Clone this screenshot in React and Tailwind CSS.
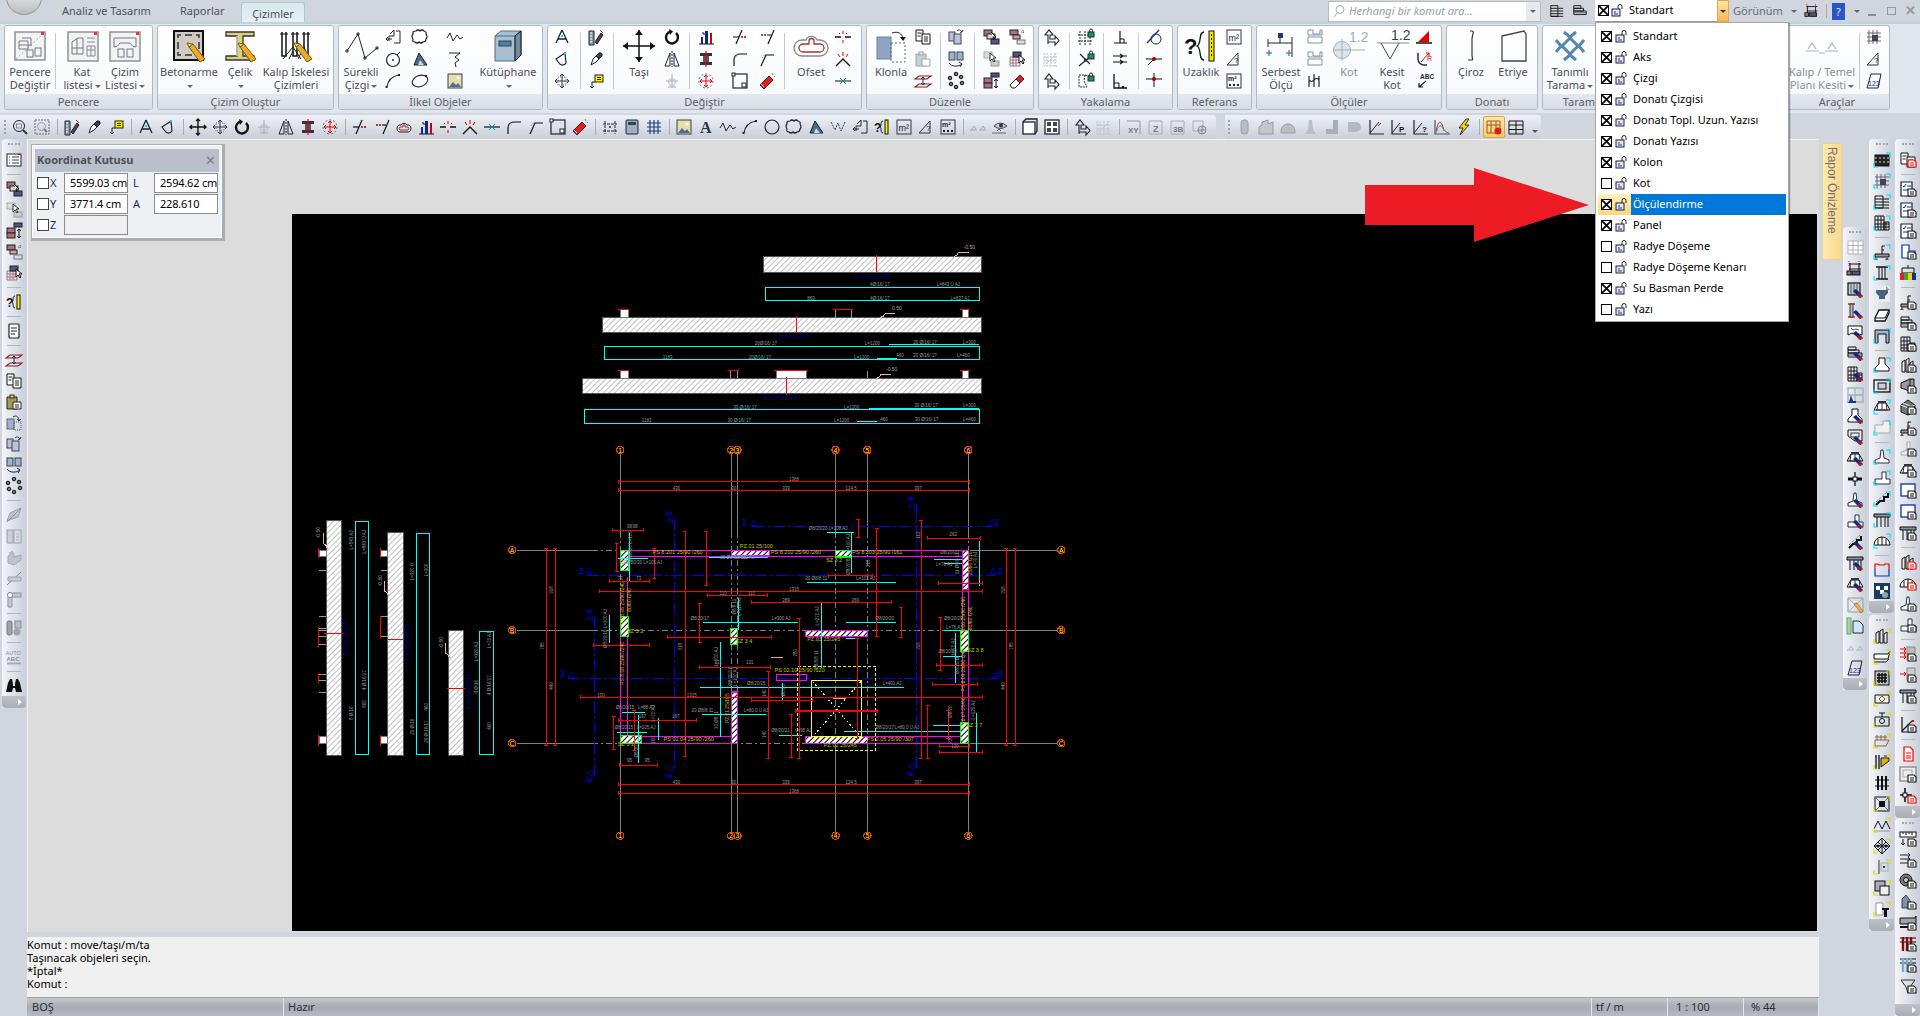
import React from 'react';

// --- small icons, drawn on an 18x18 box ---
const G = {
    zoomfit: <><circle cx="8" cy="8" r="5.5" stroke="#223" /><rect x="5.5" y="6" width="5" height="4" stroke="#888" /><path d="M12 12l4 4" strokeWidth="2" stroke="#334" /></>,
    zoombox: <><rect x="2" y="2" width="14" height="14" stroke="#667" strokeDasharray="2 1" /><circle cx="8.5" cy="8.5" r="4" stroke="#99a" /><path d="M11 11l3 3" stroke="#778" strokeWidth="2" /></>,
    rulerpen: <><path d="M2 3h5v14H2z" fill="#8c97a8" stroke="#223" /><path d="M3 5h2M3 8h2M3 11h2M3 14h2" stroke="#fff" /><path d="M8 14l6-9 2 2-6 9z" fill="#445" stroke="#223" /><path d="M13 2l3 3" stroke="#c33" /></>,
    dropper: <><path d="M4 15l2-6 5-5 3 3-5 5z" fill="#fff" stroke="#223" /><path d="M9 6l3-3h2l1 1v2l-3 3z" fill="#345" stroke="#123" /></>,
    note: <><rect x="8" y="3" width="8" height="7" fill="#fff200" stroke="#222" /><path d="M10 5.5h4M10 7.5h4" stroke="#222" /><path d="M8 10H5v6M3 14l2 2 2-2" stroke="#222" /></>,
    compass: <><path d="M9 2L3 15M9 2l6 13M5 11h8" stroke="#223" strokeWidth="1.3" /><rect x="8" y="7" width="2" height="2" fill="#0cf" stroke="none" /></>,
    triloop: <><path d="M3 9l9-6 1 10a4 4 0 0 1-7 0z" stroke="#223" strokeWidth="1.2" /><rect x="11" y="2" width="2" height="2" fill="#0cf" stroke="none" /></>,
    move: <><path d="M9 1v16M1 9h16M7 3l2-2 2 2M7 15l2 2 2-2M3 7L1 9l2 2M15 7l2 2-2 2" stroke="#111" strokeWidth="1.4" /></>,
    moveg: <><path d="M9 2v14M2 9h14M7 4l2-2 2 2M7 14l2 2 2-2M4 7L2 9l2 2M14 7l2 2-2 2" stroke="#335" /><rect x="5" y="5" width="8" height="8" stroke="#778" strokeDasharray="1 1" /></>,
    rotate: <><path d="M13 5a6 6 0 1 1-5-1.5" stroke="#111" strokeWidth="2.4" /><path d="M6 1l4 2.5L7 7z" fill="#111" stroke="none" /></>,
    fadecross: <><path d="M9 2v14M3 9h12" stroke="#aab" /><circle cx="9" cy="10" r="3.5" stroke="#bbc" /><path d="M5 15h8" stroke="#aab" /></>,
    mirror: <><path d="M7 3v13H2zM11 3v13h5z" stroke="#223" /><path d="M9 1v16" stroke="#223" strokeDasharray="2 1" /></>,
    column: <><path d="M3 3h12v3H3zM3 12h12v3H3z" fill="#334" stroke="none" /><rect x="6" y="6" width="6" height="6" fill="#556" stroke="none" /><path d="M9 1v16" stroke="#e00" strokeWidth="1.2" /></>,
    redcross: <><circle cx="9" cy="9" r="7" stroke="#567" strokeDasharray="2 2" /><path d="M9 3v12M3 9h12M7 5l2-2 2 2M7 13l2 2 2-2M5 7L3 9l2 2M13 7l2 2-2 2" stroke="#e00" /></>,
    trim: <><path d="M5 16L11 2" stroke="#111" strokeWidth="1.2" /><path d="M2 9h6" stroke="#111" strokeWidth="1.2" /><path d="M10 9h6" stroke="#a00" strokeWidth="1.5" strokeDasharray="2 1" /></>,
    trim2: <><path d="M10 16L16 2" stroke="#111" strokeWidth="1.2" /><path d="M8 7H2" stroke="#a00" strokeWidth="1.5" strokeDasharray="2 1" /><path d="M9 7h4" stroke="#111" strokeWidth="1.2" /></>,
    offs: <><path d="M4 14a4 4 0 0 1 0-7h2a3.500 3.500 0 0 1 6 0h2a4 4 0 0 1 0 7z" stroke="#222" /><path d="M5 12a2 2 0 0 1 0-3h3V7h2v2h3a2 2 0 0 1 0 3z" stroke="#a33" /></>,
    bars: <><path d="M2 16h15" stroke="#111" /><rect x="4" y="9" width="2" height="7" fill="#0a2a8a" stroke="none" /><rect x="8" y="3" width="3" height="13" fill="#0a2a8a" stroke="none" /><rect x="13" y="5" width="2" height="11" fill="#c00" stroke="none" /><path d="M5 5h2v2" stroke="#111" /></>,
    brk: <><path d="M1 9h6M11 9h6" stroke="#111" strokeWidth="1.6" /><path d="M9 3v3M9 12v3M5 5l1 1M13 5l-1 1" stroke="#c00" /></>,
    brk2: <><path d="M2 16l7-7 7 7" stroke="#111" strokeWidth="1.4" /><path d="M9 2v4M4 4l2 3M14 4l-2 3" stroke="#c00" /></>,
    xcross: <><path d="M1 9h16" stroke="#111" strokeWidth="1.2" /><path d="M6 6l6 6M12 6l-6 6" stroke="#08a" /></>,
    fillet: <><path d="M3 16V10c0-4 3-6 6-6h7" stroke="#111" strokeWidth="1.2" /><path d="M3 9l5-6" stroke="#555" strokeDasharray="1 1" /></>,
    fillet2: <><path d="M3 16L8 5h8" stroke="#111" strokeWidth="1.2" /><path d="M4 8c1-2 2-3 4-4" stroke="#777" strokeDasharray="1 1" /></>,
    rectn: <><rect x="2" y="2" width="14" height="14" stroke="#223" strokeWidth="1.2" /><rect x="1" y="1" width="3" height="3" fill="#fff" stroke="#223" /><rect x="11" y="11" width="4" height="4" fill="#fff" stroke="#223" /></>,
    eraser: <><path d="M2 13l9-9 4 4-9 9z" fill="#d22" stroke="#511" /><path d="M3 12l3 3" stroke="#fff" /><path d="M14 1l1 2M16 4l1 1" stroke="#888" /></>,
    eraserw: <><path d="M2 13l6-6 4 4-5 5H4z" fill="#fff" stroke="#222" /><path d="M8 7l4-4 4 4-4 4z" fill="#d22" stroke="#511" /></>,
    griddot: <><path d="M4 3v13M14 3v13M2 6h14M2 13h14" stroke="#223" strokeDasharray="3 1" /><path d="M8 9h2M9 8v2" stroke="#223" /></>,
    colsb: <><rect x="3" y="2" width="12" height="14" rx="1" fill="#9db0c6" stroke="#223" /><rect x="5" y="4" width="8" height="3" fill="#345" stroke="none" /></>,
    bluegrid: <><path d="M5 2v14M9 2v14M13 2v14M2 5h14M2 9h14M2 13h14" stroke="#1a3f8c" strokeWidth="1.2" /></>,
    image: <><rect x="2" y="2" width="14" height="14" fill="#e9dca8" stroke="#345" /><path d="M3 15l4-5 3 3 2-2 3 4z" fill="#4a6f9a" stroke="none" /><circle cx="12" cy="6" r="1.500" fill="#fff" stroke="none" /></>,
    aletter: <text x="3" y="15" fontSize="16" fontFamily="Liberation Serif, serif" fontWeight="700" fill="#234" stroke="none">A</text>,
    wave: <path d="M1 10l3-5 3 8 4-6 3 4 3-2" stroke="#223" />,
    arc: <><path d="M3 15C4 8 9 4 15 3" stroke="#223" strokeWidth="1.2" /><rect x="1.500" y="14" width="2" height="2" fill="#223" stroke="none" /><rect x="14" y="2" width="2" height="2" fill="#223" stroke="none" /></>,
    circle: <circle cx="9" cy="9" r="7" stroke="#223" strokeWidth="1.2" />,
    target: <><circle cx="9" cy="10" r="6.500" stroke="#223" strokeWidth="1.2" /><circle cx="9" cy="10" r="1" fill="#223" stroke="none" /><path d="M13 5l3-3" stroke="#223" /></>,
    cloud: <path d="M5 3q2-2 4 0 2-2 4 0 3 1 2 3 2 3 0 5 0 3-3 3-2 2-4 0-2 2-4 0-3 0-2-3-2-3 0-5-1-3 3-3z" stroke="#223" strokeWidth="1.2" />,
    oval: <><ellipse cx="9" cy="9" rx="8" ry="5.500" transform="rotate(-20 9 9)" stroke="#223" strokeWidth="1.1" /><rect x="14" y="3" width="2" height="2" fill="#223" stroke="none" /></>,
    trifill: <><path d="M3 15L8 3l8 12z" fill="#4c6b8a" stroke="#123" /><path d="M7 15l2-5 4 5z" fill="#cdd6e0" stroke="none" /></>,
    zig: <><path d="M2 4l4 8 3-7 3 8 4-9" stroke="#345" strokeDasharray="2 1" /></>,
    squig: <path d="M3 3h11l-5 4 4 3-4 3 1 4" stroke="#223" />,
    plusbar: <><path d="M6 6l4-4v6H5v5M12 3h4v12h-6M8 11H2M4 9l-2 2 2 2" stroke="#223" /></>,
    qruler: <><text x="1" y="14" fontSize="12" fontFamily="Liberation Sans, sans-serif" fontWeight="700" fill="#111" stroke="none">?</text><path d="M10 3c-3 0-1 5-3 6 2 1 0 6 3 6" stroke="#111" /><rect x="12" y="2" width="3" height="14" fill="#fff200" stroke="#111" /></>,
    m2: <><rect x="2" y="2" width="14" height="14" stroke="#334" /><text x="3.500" y="13" fontSize="9" fontFamily="Liberation Sans, sans-serif" fill="#223" stroke="none">m²</text></>,
    angle: <><path d="M2 15L13 3v12z" stroke="#334" /><text x="9" y="13" fontSize="8" fontFamily="Liberation Sans, sans-serif" fill="#223" stroke="none">?</text></>,
    mm2: <><rect x="2" y="2" width="14" height="14" stroke="#334" /><text x="3" y="9" fontSize="7" fontFamily="Liberation Sans, sans-serif" fontWeight="700" fill="#223" stroke="none">m²</text><path d="M4 13h2M8 13h2M12 13h2" stroke="#223" strokeWidth="2" /></>,
    fadelvl: <><path d="M1 12h7M10 12h7M3 11l2-3 2 3M12 11l2-3 2 3" stroke="#9aa" /></>,
    eye: <><path d="M3 8q6-6 13 0-7 5-13 0z" stroke="#445" fill="#ccd" /><circle cx="10" cy="7.500" r="2" fill="#334" stroke="none" /><path d="M1 15h14M6 13l2-2 2 2" stroke="#667" /></>,
    win1: <><rect x="2" y="4" width="12" height="12" fill="#fff" stroke="#223" strokeWidth="1.3" /><path d="M2 4l3-3h11v12l-2 3" stroke="#223" strokeWidth="1.3" /></>,
    win2: <><rect x="2" y="2" width="14" height="14" fill="#fff" stroke="#223" strokeWidth="1.3" /><rect x="4" y="4" width="4" height="4" fill="#445" stroke="none" /><rect x="10" y="4" width="4" height="4" fill="#445" stroke="none" /><rect x="10" y="10" width="4" height="4" fill="#445" stroke="none" /><rect x="4" y="10" width="4" height="4" fill="#445" stroke="none" /></>,
    lshape: <path d="M6 16V7H3l4-5 4 5H8v4h5V8l4 4.500-4 4.500v-3H6" stroke="#223" strokeWidth="1.1" />,
    fadegrid: <><path d="M2 3v13h13M2 16L15 3M5 3v13M9 3v13M13 3v13M2 7h13M2 11h13" stroke="#bcc4ce" strokeDasharray="2 1" /></>,
    xy: <><path d="M2 3h13v13" stroke="#99a" /><text x="3" y="15" fontSize="8" fontFamily="Liberation Sans, sans-serif" fontWeight="700" fill="#778" stroke="none">XY</text></>,
    ez: <><path d="M2 3h13v13H2z" stroke="#aab" /><text x="6" y="14" fontSize="9" fontFamily="Liberation Sans, sans-serif" fontWeight="700" fill="#778" stroke="none">Z</text></>,
    e3d: <><path d="M2 3h13v13H2z" stroke="#aab" /><text x="4" y="14" fontSize="8" fontFamily="Liberation Sans, sans-serif" fontWeight="700" fill="#778" stroke="none">3B</text></>,
    eo: <><path d="M2 3h10v10H2z" stroke="#aab" /><circle cx="11" cy="12" r="4" stroke="#889" /><path d="M7 12h8M11 8v8" stroke="#889" /></>,
    fadeA: <rect x="6" y="2" width="7" height="14" rx="3" fill="#b8bcc4" stroke="#9a9ea6" />,
    fadeB: <path d="M2 16V9l3-2V4l6-2v4l5-2v12z" stroke="#999" fill="#c4c8ce" />,
    fadeC: <path d="M2 13a7 7 0 0 1 14 0v2H2z" fill="#b9bdc4" stroke="#9a9ea6" />,
    fadeD: <path d="M8 2h3l1 9 3 5H4l3-5z" fill="#bbbfc6" stroke="none" />,
    fadeE: <path d="M10 2h5v14H3v-5h7z" fill="#a9adb4" stroke="none" />,
    fadeF: <path d="M3 4h8a5 5 0 0 1 0 10H3z" fill="#b4b8bf" stroke="none" />,
    chart1: <><path d="M3 2v14h14" stroke="#223" strokeWidth="1.2" /><path d="M3 15L12 4" stroke="#223" /><path d="M11 8l3-3" stroke="#c00" /></>,
    chart2: <><path d="M3 2v14h14" stroke="#223" strokeWidth="1.2" /><path d="M3 15L11 5" stroke="#223" /><text x="10" y="14" fontSize="8" fontFamily="Liberation Sans, sans-serif" fontWeight="700" fill="#111" stroke="none">P</text></>,
    chart3: <><path d="M3 2v14h14" stroke="#223" strokeWidth="1.2" /><path d="M3 15L11 5" stroke="#223" /><text x="11" y="14" fontSize="8" fontFamily="Liberation Sans, sans-serif" fontWeight="700" fill="#111" stroke="none">?</text></>,
    chart4: <><path d="M2 2v14h15" stroke="#556" strokeWidth="1.2" /><path d="M3 14c2-12 5-12 7-5 1 4 4 6 6 6" stroke="#d22" /><path d="M3 15c3-9 5-9 8-2" stroke="#2a8" /></>,
    bolt: <><path d="M11 1L4 10h4l-3 7 9-10H10l4-6z" fill="#f7d000" stroke="#333" /></>,
    activeg: <><path d="M2 3h13v12H2zM2 7h13M6 3v12M11 3v12" stroke="#a0522d" /><circle cx="13" cy="13" r="3.500" fill="#d81f1f" stroke="none" /></>,
    table: <><path d="M2 3h14v13H2zM2 7h14M2 11.500h14M9 3v13" stroke="#111" /></>,
    list: <><rect x="2" y="3" width="14" height="12" fill="#fff" stroke="#445" strokeWidth="1.2" /><path d="M4 6h1M4 9h1M4 12h1M7 6h7M7 9h7M7 12h7" stroke="#345" /><rect x="13" y="3" width="2" height="1" fill="#e00" stroke="none" /></>,
    lyrA: <><rect x="2" y="2" width="8" height="6" fill="#a9717f" stroke="#222" /><rect x="5" y="6" width="8" height="5" fill="#d2d2d8" stroke="#222" /><rect x="9" y="11" width="8" height="5" fill="#4d5580" stroke="#222" /><path d="M9 4l5 5-3 0 1 3" stroke="#111" fill="#fff" /></>,
    lyrB: <><rect x="2" y="2" width="8" height="6" stroke="#aaa" fill="#ddd" /><rect x="9" y="11" width="8" height="5" fill="#ccc" stroke="#999" /><path d="M8 3v8l2-2 2 3 1-1-2-3h3z" fill="#fff" stroke="#333" /></>,
    lyrC: <><rect x="9" y="1" width="8" height="4" fill="#4d5580" stroke="#222" /><rect x="2" y="6" width="8" height="5" fill="#a9717f" stroke="#222" /><rect x="2" y="11" width="8" height="5" fill="#a9717f" stroke="#222" /><path d="M14 7v9M12 9l2-2 2 2M12 14l2 2 2-2" stroke="#111" /></>,
    lyrD: <><rect x="2" y="2" width="8" height="5" fill="#a9717f" stroke="#222" /><rect x="5" y="7" width="7" height="4" fill="#c9a3ac" stroke="#222" /><rect x="9" y="12" width="8" height="4" fill="#ddd" stroke="#777" /><path d="M13 4h4M15 2v4" stroke="#555" strokeDasharray="1 1" /></>,
    gridcur: <><path d="M2 7h10v9H2zM2 10h10M2 13h10M5 7v9M8 7v9" stroke="#a9717f" /><rect x="5" y="2" width="8" height="5" fill="#4d5580" stroke="#222" /><path d="M11 5v8l2-2 2 3 1-1-2-3h3z" fill="#fff" stroke="#111" /></>,
    doclines: <><rect x="4" y="2" width="10" height="14" rx="1" fill="#fff" stroke="#223" strokeWidth="1.2" /><path d="M6 6h6M6 9h6M6 12h4" stroke="#223" /></>,
    zplane: <><path d="M5 4h12l-4 3H1zM5 12h12l-4 3H1z" stroke="#8c1a1a" strokeWidth="1.1" /><path d="M9 5v8M7 7l2-2 2 2M7 11l2 2 2-2" stroke="#234" /></>,
    copy: <><path d="M2 2h7v11H2z" fill="#fff" stroke="#111" /><path d="M8 6h8v10H8z" fill="#fff" stroke="#111" /><path d="M3.500 5h4M3.500 8h3M10 9h4M10 11h4M10 13h4" stroke="#222" /></>,
    paste: <><path d="M2 4h10v12H2z" fill="#a59b52" stroke="#222" /><rect x="5" y="2" width="4" height="3" fill="#dfd98a" stroke="#222" /><path d="M8 9h8v7H8z" fill="#fff" stroke="#222" /><path d="M10 12h4M10 14h4" stroke="#222" /></>,
    pastef: <><path d="M2 4h10v12H2z" fill="#c8ced8" stroke="#9aa4b2" /><rect x="5" y="2" width="4" height="3" fill="#e4e8ee" stroke="#9aa4b2" /><path d="M8 9h8v7H8z" fill="#fff" stroke="#9aa4b2" /></>,
    clonedash: <><rect x="2" y="5" width="7" height="10" fill="#9db2ce" stroke="#667" /><rect x="9" y="8" width="7" height="8" stroke="#556" strokeDasharray="1 1" /><path d="M8 3c3-2 5-1 6 3M12 5l2 2 2-2" stroke="#233" /></>,
    cloneup: <><rect x="2" y="4" width="6" height="9" fill="#b7c4d7" stroke="#445" /><rect x="7" y="6" width="7" height="10" fill="#b7c4d7" stroke="#445" /><path d="M10 3c2-2 3-1 5 1M13 5l2-1 1-2" stroke="#233" /></>,
    clonedown: <><rect x="2" y="2" width="6" height="8" fill="#9db2ce" stroke="#345" /><rect x="10" y="2" width="6" height="8" fill="#9db2ce" stroke="#345" /><path d="M2 13c3 4 9 4 13 1M12 12l3 2-2 3" stroke="#124" /></>,
    circles: <>{[[9, 2], [14, 5], [15, 11], [9, 15], [4, 12], [3, 6]].map(([x, y], i) => <circle key={i} cx={x} cy={y} r="1.800" fill="#777" stroke="#111" />)}</>,
    fplane: <><path d="M2 15L5 7l11-5-3 9z" fill="#c0c4ca" stroke="#a0a4aa" /><path d="M2 16L16 2" stroke="#8e9298" /></>,
    fframe: <><rect x="2" y="3" width="6" height="13" fill="#ccd0d6" stroke="#9ea2a8" /><rect x="9" y="3" width="7" height="13" stroke="#9ea2a8" /><path d="M11 7h3M11 10h3M11 13h3" stroke="#aaa" /></>,
    fblock: <path d="M3 15V8l2-1V4l2 2V3l2 3v3l7-2v5l-7 5z" fill="#c0c4ca" stroke="#a8acb2" />,
    fcut: <><path d="M2 16L16 3" stroke="#888" /><path d="M3 8h13v4H3z" fill="#c8ccd2" stroke="#a0a4aa" /></>,
    fL: <><path d="M3 3h13v4H7v10H3z" fill="#c6c9cf" stroke="#8f9399" /><circle cx="5" cy="5" r="2.500" stroke="#8f9399" fill="#fff" /></>,
    fcols: <><rect x="2" y="2" width="5" height="14" rx="2" fill="#a0a4aa" stroke="#777" /><rect x="10" y="2" width="6" height="7" fill="#b9bdc3" stroke="#8a8e94" /><circle cx="12" cy="13" r="3.500" fill="#a0a4aa" stroke="none" /></>,
    autoabc: <><text x="0.500" y="7" fontSize="5.500" fontFamily="Liberation Sans, sans-serif" fill="#8e9298" stroke="none">AUTO</text><text x="1.500" y="13" fontSize="6" fontFamily="Liberation Sans, sans-serif" fontWeight="700" fill="#8e9298" stroke="none">ABC</text><rect x="2" y="14.500" width="14" height="2" fill="#a7abb1" stroke="none" /></>,
    binoc: <><path d="M3 6l2-4h2l1 5v2h2V7l1-5h2l2 4 2 9h-6l-1-4H8l-1 4H1z" fill="#111" stroke="none" /></>,
    tgrid: <><rect x="2" y="2" width="15" height="13" fill="#fff" stroke="#b0b4ba" /><path d="M7 2v13M12 2v13M2 6.500h15M2 11h15" stroke="#b0b4ba" /></>,
    nodes: <><path d="M3 4h12M3 9h12M4 3v9M13 3v9" stroke="#111" /><path d="M3 1v6M13 1v6" stroke="#e03" strokeDasharray="1 1" /><rect x="6" y="11" width="8" height="4" fill="#4d5580" stroke="#111" /><rect x="1" y="11" width="4" height="4" fill="#a9717f" stroke="#111" /></>,
    hatchf: <><rect x="2" y="2" width="12" height="12" fill="#c8ccd2" stroke="#111" strokeWidth="1.2" /><path d="M5 2v12M8 2v12M11 2v12" stroke="#555" /></>,
    ibeam: <><path d="M2 2h7M2 15h7" stroke="#d22" strokeWidth="1.4" /><path d="M4 2h3v13H4z" fill="#b8bcc2" stroke="#333" /></>,
    frameb: <><path d="M2 3h14v9l-3-1-3 1-4-2-4 2z" fill="#fff" stroke="#111" /><path d="M5 5l2 2 3-1 3 1" stroke="#555" /></>,
    stairs: <><path d="M2 3h8v3H2zM2 6h11v3H2zM2 9h14v4H2z" stroke="#111" /><path d="M2 11h14" stroke="#555" /></>,
    bgrid: <><path d="M2 2h9v14H2zM11 8h5v8h-5zM2 6h9M2 10h14M2 13h14M5 2v14M8 2v14M13 8v8" stroke="#111" /></>,
    winblue: <><path d="M2 2h15v14H2zM9 2v14M2 9h15" stroke="#aab0b8" strokeWidth="1.3" /><path d="M3 16l2-7 2 6h3v2H1z" fill="#1a2f8c" stroke="none" /></>,
    foot: <path d="M6 2h6v6l4 4v3H2v-3l4-4z" stroke="#111" fill="#fff" />,
    frame2: <><path d="M2 2h14v11H9L2 8z" stroke="#111" fill="#eee" /><rect x="5" y="5" width="8" height="4" stroke="#333" /></>,
    roof: <><path d="M1 12l4-7h8l4 7z" fill="#fff" stroke="#111" /><path d="M3 12h12M5 5l-1 7M9 5v7M13 5l1 7" stroke="#333" /><rect x="5" y="3" width="8" height="2" fill="#334" stroke="none" /></>,
    cross: <><path d="M9 2v14" stroke="#111" strokeWidth="1.3" /><path d="M2 9h14" stroke="#111" strokeWidth="3" /><rect x="7" y="7" width="4" height="4" fill="#fff" stroke="#111" /></>,
    tee: <path d="M8 2h2l1 8 5 2v3H2v-3l5-2z" fill="#fff" stroke="#234" />,
    tee2: <path d="M9 3h4v7h4v5H2v-5h7z" fill="#fff" stroke="#234" />,
    zigz: <><path d="M3 15l4-4h4V7h4V3" stroke="#111" strokeWidth="2" /><path d="M3 12L14 2" stroke="#555" strokeDasharray="1 1" /></>,
    colrow: <><path d="M1 3h16v3H1z" fill="#8393a6" stroke="#111" /><path d="M4 6v10M8 6v10M12 6v10M15 6v10" stroke="#111" /></>,
    fpenc: <><path d="M2 2h15v14H2z" stroke="#999" /><path d="M2 2l15 14M17 2L2 16" stroke="#aaa" /></>,
    greendoc: <><rect x="1" y="1" width="4" height="16" fill="#b5cfa1" stroke="#5a7" /><path d="M7 4h6l4 4v8H7z" fill="#cfe6f7" stroke="#234" /></>,
    fltri: <path d="M1 12h7M10 12h7M3 11l2-3 2 3M12 11l2-3 2 3" stroke="#b0b4ba" />,
    n123: <><path d="M6 2h10l-3 14H2z" stroke="#223" /><text x="3" y="14" fontSize="7" fontFamily="Liberation Sans, sans-serif" fill="#0a2a9a" stroke="none">123</text></>,
    checker: <><rect x="2" y="4" width="14" height="11" fill="#222" stroke="#111" /><path d="M2 7h14M2 11h14" stroke="#ddd" strokeDasharray="2 2" /></>,
    mesh: <><path d="M4 2v14M8 2v14M12 2v14M2 5h14M2 9h14M2 13h14" stroke="#667" /><rect x="7" y="7" width="6" height="6" fill="#445" stroke="none" /></>,
    lines4: <><path d="M2 3h8v12H2zM2 6h14M2 9h14M2 12h14M2 15h14" stroke="#111" /></>,
    beamF: <><path d="M2 11h14v3H2z" fill="#999" stroke="#111" /><path d="M9 11V3h3M9 7h2" stroke="#111" /><path d="M3 14l2 3h-4zM14 14l2 3h-4z" fill="#555" stroke="none" /></>,
    pilaster: <><path d="M3 3h12M3 15h12" stroke="#111" strokeWidth="1.4" /><path d="M6 3v12M9 3v12M12 3v12" stroke="#111" /></>,
    funnel: <><rect x="1" y="1" width="16" height="16" fill="#e8eaee" stroke="none" /><path d="M3 5h12v3l-3 3v3H6v-3L3 8z" fill="#45627e" stroke="none" /><path d="M13 1l4 4h-4z" fill="#9a9ea6" stroke="none" /></>,
    slab: <><path d="M2 12l4-8h10v3l-4 8H2z" fill="#fff" stroke="#111" strokeWidth="1.3" /><path d="M2 12h10l4-8" stroke="#111" /></>,
    portal: <path d="M2 16V3h14v13h-3V7H5v9z" fill="#9db2ce" stroke="#111" />,
    rectin: <><rect x="1" y="3" width="16" height="12" stroke="#111" strokeWidth="1.3" /><rect x="5" y="6" width="8" height="6" fill="#ccc" stroke="#111" /></>,
    fadewin: <><path d="M2 14V6h8V2h7v12z" fill="#f0f0f0" stroke="#aaa" /></>,
    dome: <><path d="M1 13a8 8 0 0 1 16 0z" fill="#fff" stroke="#111" /><path d="M5 13V7M9 13V5M13 13V7" stroke="#111" /></>,
    redblue: <><path d="M2 8V3h3l1 1h5l1-1h4v5" stroke="#e00" strokeWidth="1.2" /><path d="M2 8v7h14V8" stroke="#03c" strokeWidth="1.2" /></>,
    chkblue: <><rect x="1" y="1" width="16" height="16" fill="#1c3a5e" stroke="none" /><path d="M3 4h4v4H3zM11 4h4v4h-4zM7 8h4v4H7z" fill="#fff" stroke="none" /><circle cx="12" cy="13" r="3" fill="#8aa" stroke="none" /></>,
    colsp: <><path d="M3 16V6l3-2v12zM7 16V4l3-2v14zM11 16V7l3-2v11z" fill="#eee" stroke="#111" /></>,
    wedge: <><path d="M1 6h14l2-3-2 8H1z" fill="#fff" stroke="#111" /><path d="M1 14h12l3-3" stroke="#111" /></>,
    gridb: <><rect x="2" y="2" width="14" height="14" fill="#bbb" stroke="#111" /><path d="M6 4v10M9 4v10M12 4v10M4 6h10M4 9h10M4 12h10" stroke="#111" strokeWidth="1.5" /></>,
    cbox: <><path d="M2 5h14v8H2z" stroke="#111" fill="#eee" /><path d="M9 6l3 3-3 3-3-3z" stroke="#7a5a00" fill="#ffd" /></>,
    tbox: <><path d="M2 6h14v9H2zM6 2h6M9 2v4" stroke="#111" /><circle cx="9" cy="10" r="2.500" stroke="#111" /></>,
    wallb: <><path d="M2 8h14l-3 6H2zM4 3v5M8 3v5M12 3v5" stroke="#864" /><path d="M2 5h12" stroke="#864" /></>,
    barsv: <><path d="M3 2v14M6 2v14" stroke="#111" strokeWidth="1.3" /><path d="M8 5h8v3l-8 6z" fill="#ddb300" stroke="#111" /><path d="M11 2h3v4h-3z" fill="#777" stroke="none" /></>,
    rail: <><path d="M5 2v14M9 2v14M13 2v14" stroke="#111" strokeWidth="2" /><path d="M2 6h14M2 12h14" stroke="#111" /></>,
    xbox: <><rect x="2" y="2" width="14" height="14" stroke="#111" /><path d="M2 2l14 14M16 2L2 16" stroke="#777" /><rect x="6" y="6" width="6" height="6" fill="#111" stroke="none" /></>,
    waves: <><path d="M1 13l4-8 4 8 4-8 4 8" stroke="#111" /><path d="M1 15h16" stroke="#999" /></>,
    star: <><path d="M9 1l8 8-8 8-8-8zM9 1v16M1 9h16M5 5l8 8M13 5l-8 8" stroke="#111" /><circle cx="5" cy="9" r="1.500" fill="#111" stroke="none" /><circle cx="13" cy="9" r="1.500" fill="#111" stroke="none" /></>,
    dashb: <><path d="M6 2v14" stroke="#333" /><rect x="8" y="5" width="7" height="8" stroke="#aaa" /><rect x="10" y="8" width="2" height="2" fill="#333" stroke="none" /></>,
    hatchsq: <><rect x="2" y="2" width="10" height="10" fill="#aab" stroke="#111" /><rect x="7" y="7" width="9" height="9" fill="#eee" stroke="#111" /></>,
    flag: <><path d="M3 3h7v12H3z" stroke="#999" fill="#fff" /><path d="M9 8h7v2h-2v7h-3V10H9z" fill="#111" stroke="none" /></>,
    lightf: <path d="M8 2h3v8l5 2v3H2v-3l6-2z" stroke="#aaa" fill="#eee" />,
    check1: <><path d="M2 2h11v14H2z" fill="#fff" stroke="#123" strokeWidth="1.2" /><path d="M4 6l1 1 2-3M8 6h4M4 10h7" stroke="#03a" /></>,
    lfold: <><path d="M3 2h7v6h6v7H3z" fill="#fff" stroke="#03a" strokeWidth="1.2" /></>,
    rainbow: <><path d="M9 1v3M3 4h12v5H3z" stroke="#111" /><rect x="1" y="9" width="16" height="7" fill="#ffcc00" stroke="none" /><rect x="1" y="9" width="4" height="7" fill="#d22" stroke="none" /><rect x="5" y="9" width="4" height="7" fill="#3a3" stroke="none" /><rect x="13" y="9" width="4" height="7" fill="#03a" stroke="none" /></>,
    cone: <path d="M2 6l9-4v12l-9-3zM11 2h4v12h-4" fill="#999" stroke="#111" />,
    stackb: <><path d="M2 7l7-5 7 5v7l-7 3-7-3z" fill="#777" stroke="#111" /><path d="M2 7l7 3 7-3M4 5l7 3" stroke="#ddd" /></>,
    box2: <><rect x="2" y="2" width="14" height="12" fill="#fff" stroke="#03a" strokeWidth="1.3" /></>,
    redarr: <><path d="M1 4h6M1 8h6M1 12h6M5 2l2 2-2 2M5 6l2 2-2 2M5 10l2 2-2 2" stroke="#e00" /><rect x="8" y="2" width="8" height="12" fill="#bbb" stroke="#888" /></>,
    redarr1: <><path d="M1 8h6M5 6l2 2-2 2" stroke="#e00" /><rect x="8" y="2" width="8" height="12" fill="#ccc" stroke="#888" /></>,
    axes: <><path d="M3 1v15h14M3 15L13 5" stroke="#111" strokeWidth="1.2" /><rect x="13" y="4" width="2" height="2" fill="#d00" stroke="none" /></>,
    fimage: <><rect x="1" y="1" width="16" height="14" fill="#eee" stroke="#888" strokeWidth="1.3" /><rect x="4" y="4" width="9" height="7" stroke="#aaa" /></>,
    crossr: <><path d="M6 1v14M1 8h12" stroke="#111" strokeWidth="1.6" /><rect x="4" y="6" width="4" height="4" fill="#fff" stroke="#111" /></>,
    rulerh: <><rect x="1" y="2" width="16" height="5" fill="#fff" stroke="#111" /><path d="M4 2v2M7 2v3M10 2v2M13 2v3" stroke="#111" /><path d="M4 9v6M2 13l2 2 2-2" stroke="#111" /></>,
    linesr: <path d="M1 4h10M1 8h10M1 12h10M9 2l2 2-2 2M9 6l2 2-2 2" stroke="#223" />,
    coil: <><circle cx="7" cy="8" r="6" fill="#777" stroke="#111" /><circle cx="7" cy="8" r="2.500" fill="#ccc" stroke="#111" /></>,
    wedgeb: <path d="M3 15V6l4-4 3 4 3 5v4z" fill="#7d8fa3" stroke="#345" />,
    beamg: <><path d="M1 4h15l1-2v8H1z" fill="#a0a4aa" stroke="#111" /><path d="M1 13h15" stroke="#111" strokeWidth="2" /></>,
    redrail: <><path d="M1 3h16M1 7h16" stroke="#111" /><path d="M4 2v14M8 2v14M12 2v14" stroke="#8a0a0a" strokeWidth="2.400" /></>,
    bluerail: <><path d="M1 3h16M1 7h16" stroke="#111" /><path d="M4 2v14M8 2v14M12 2v14" stroke="#7fa8c9" strokeWidth="2.400" /></>,
    vfun: <path d="M2 3h14l-5 7-2 6-2-6z" stroke="#333" />,
    doc: <><path d="M9 9h6l2 2v5H9z" fill="#fff" stroke="#111" strokeWidth="1.1" /><path d="M11 12h4M11 14h4" stroke="#111" /></>,
    docr: <><path d="M9 9h6l2 2v5H9z" fill="#fff" stroke="#e00" strokeWidth="1.2" /><path d="M11 12h4M11 14h4" stroke="#e00" /></>,
    docred: <><path d="M5 2h6l3 3v11H5z" fill="#fff" stroke="#e00" strokeWidth="1.2" /><path d="M7 8h5M7 11h5M7 13h5" stroke="#e00" /></>,
    pen: <><path d="M7 10l3-2 7 7-1 2-2 0z" fill="#0a2a8a" stroke="none" /><path d="M13 12l3 3-1 2-2-1-2-2z" fill="#b1121b" stroke="none" /><path d="M16 15l1 2-2 0z" fill="#f2c97d" stroke="none" /></>,
    penyel: <><path d="M8 8l3-1 6 8-2 2z" fill="#f0b040" stroke="#7a5a00" strokeWidth="0.5" /></>,
    brc: <path d="M13 2h4v4M1 12v4h4" stroke="#0df" strokeWidth="1.1" />,
    ybr: <path d="M13 2h4v4M1 12v4h4" stroke="#e8d800" strokeWidth="1.2" />,
    // snap icons of the Yakalama group
    lock: <><rect x="11" y="4" width="6" height="5" fill="#2e8b57" stroke="#134" /><path d="M12.500 4V2.500a1.500 1.500 0 0 1 3 0V4" stroke="#134" /></>,
    gridr: <><path d="M3 3v14M8 3v14M13 3v14M1 7h15M1 13h15" stroke="#223" strokeDasharray="2 1" /></>,
    snapx: <><path d="M2 16L14 6M3 4l10 10" stroke="#223" strokeWidth="1.2" /><circle cx="8.500" cy="10" r="1.500" fill="#223" stroke="none" /></>,
    snapz: <><path d="M2 3h6l-1 6 3 6H2zM8 3l8 2" stroke="#223" strokeDasharray="2 1" /></>,
    perp: <><path d="M3 15h13M9 3v12" stroke="#111" strokeWidth="1.2" /><path d="M9 11h4v4" stroke="#111" /></>,
    para: <><path d="M2 6h14M2 12h14M9 4l3 2-3 2M9 10l3 2-3 2" stroke="#111" strokeWidth="1.100" /></>,
    corner: <><path d="M3 2v14h13" stroke="#111" strokeWidth="1.3" /><path d="M3 11h5v5" stroke="#111" /><rect x="11" y="14" width="2" height="2" fill="#111" stroke="none" /></>,
    ctan: <><circle cx="11" cy="11" r="5" stroke="#223" /><path d="M2 15L14 2" stroke="#03a" strokeWidth="1.2" /></>,
    dotl: <><path d="M1 9h16" stroke="#111" /><circle cx="9" cy="9" r="2" fill="#a00" stroke="none" /><path d="M3 15l5-5M5 10v0" stroke="#111" /></>,
    dotc: <><path d="M1 7h16M9 1v14" stroke="#111" /><circle cx="9" cy="7" r="2" fill="#a00" stroke="none" /></>,
    fadeframe: <><path d="M2 2h5v4h7V2h2v5H2zM2 9h14v6H2z" stroke="#7d93ab" /></>,
    hbars: <><path d="M3 4v11M8 2v13M13 4v11M3 8c2 2 3 2 5 0s3-2 5 0" stroke="#223" strokeWidth="1.2" /></>,
    redtri: <><path d="M3 14L14 3v11z" fill="#d00" stroke="none" /><path d="M1 15h16" stroke="#111" strokeWidth="1.4" /></>,
    rarc: <><path d="M3 3v6a6 6 0 0 0 6 6h3" stroke="#234" strokeWidth="1.5" /><path d="M6 12L14 3M11 3h3v3" stroke="#d00" /><text x="12" y="11" fontSize="7" fontFamily="Liberation Sans, sans-serif" fill="#d00" stroke="none">R</text></>,
    abcarr: <><text x="5" y="7" fontSize="6.500" fontFamily="Liberation Sans, sans-serif" fontWeight="700" fill="#223" stroke="none">ABC</text><path d="M11 9l-7 6M4 11v4h4" stroke="#111" strokeWidth="1.2" /></>,
};

// "name+overlay" stacks the parts in one svg
const Ic = ({ n, s = 18 }) => (
    <svg width={s} height={s} viewBox="0 0 18 18" fill="none" stroke="#111" className="shrink-0 overflow-visible">
        {n.split('+').map((p, i) => <g key={i}>{G[p]}</g>)}
    </svg>
);

// --- large ribbon icons, 34x34 box ---
const L = {
    pencere: <><rect x="2" y="3" width="30" height="28" fill="#f3f3f3" stroke="#8d9299" strokeWidth="1.5" /><path d="M3 30L31 4" stroke="#aab" strokeDasharray="2 2" /><path d="M6 12h9v8H6zM9 9h9v8M6 16h12" stroke="#778" /><rect x="22" y="19" width="6" height="8" stroke="#778" /><rect x="14" y="21" width="6" height="7" stroke="#778" /><rect x="28" y="3" width="3" height="3" fill="#e33" stroke="none" /></>,
    kat: <><rect x="3" y="3" width="30" height="29" fill="#f3f3f3" stroke="#8d9299" strokeWidth="1.5" /><path d="M7 13l6-4h5v16H7zM7 19h11M12 9v16" stroke="#778" /><path d="M22 9h8M22 13h8M22 17h8v10h-8zM26 17v10M22 21h8" stroke="#889" /><rect x="29" y="3" width="3" height="3" fill="#e33" stroke="none" /></>,
    cizim: <><rect x="2" y="3" width="30" height="29" fill="#f3f3f3" stroke="#8d9299" strokeWidth="1.5" /><path d="M6 9h22v9c-3 0-5-2-6-4H12c-1 2-3 4-6 4z" stroke="#778" /><rect x="10" y="20" width="6" height="8" stroke="#778" /><rect x="19" y="20" width="6" height="8" stroke="#778" /><rect x="28" y="3" width="3" height="3" fill="#e33" stroke="none" /></>,
    pencil: <><path d="M17 18l4-3 12 15-5 3z" fill="#e9a92b" stroke="#7a5a00" /><path d="M17 18l4-3-6-1z" fill="#f2d2a0" stroke="#7a5a00" /></>,
    beton: <><rect x="2" y="2" width="29" height="29" fill="#cfcac2" stroke="#111" strokeWidth="2" /><path d="M6 9V6h3M24 6h3v3M27 23v3h-3M9 26H6v-3M13 6h7M6 13v7M27 13v7M13 26h7" stroke="#333" strokeWidth="1.500" /></>,
    celik: <><path d="M3 3h28v4H20v20h11v4H3v-4h11V7H3z" fill="#dccf80" stroke="#333" strokeWidth="1.300" /><path d="M14 7v20" stroke="#fff" /></>,
    kalip: <><path d="M3 3v24h4V3M14 3v24h4V3M25 3v24h4V3" stroke="#111" strokeWidth="1.500" /><path d="M1 5h8M12 5h8M23 5h8" stroke="#111" /><path d="M4 30l10-12 8 12M10 30l4-8M19 30l6-12 5 12" stroke="#111" /></>,
    surekli: <><path d="M3 22L14 5l7 24 12-10" stroke="#223" /><path d="M3 20v4M1 22h4M14 3v4M12 5h4M21 27v4M19 29h4M33 17v4M31 19h4" stroke="#223" /></>,
    kutup: <><path d="M4 7l6-5h20v24l-6 6H4z" fill="#a6bfd3" stroke="#4f6c85" /><path d="M4 7h20v25M24 7l6-5" stroke="#4f6c85" /><path d="M24 7l6-5v24l-6 6z" fill="#6f8ba3" /><rect x="8" y="12" width="12" height="5" fill="#4e7ea6" stroke="#345" /></>,
    tasi: <><path d="M17 1v32M1 17h32" stroke="#111" strokeWidth="1.500" /><path d="M13 6l4-5 4 5zM13 28l4 5 4-5zM6 13l-5 4 5 4zM28 13l5 4-5 4z" fill="#111" stroke="none" /></>,
    klonla: <><rect x="3" y="8" width="14" height="22" fill="#8ea6c4" stroke="#6a7f9a" /><rect x="17" y="14" width="14" height="19" stroke="#667" strokeDasharray="2 2" /><path d="M18 4c6-2 10 0 11 6" stroke="#223" /><path d="M26 8l3 4 3-4z" fill="#111" stroke="none" /></>,
    ofset: <><path d="M8 27a8 8 0 0 1 0-16h4a6 6 0 0 1 11 0h3a8 8 0 0 1 0 16z" fill="#fff" stroke="#888" strokeWidth="1.300" /><path d="M9 23a4 4 0 0 1 0-8h6v-3a2 2 0 0 1 5 0v3h6a4 4 0 0 1 0 8z" stroke="#a33" strokeWidth="1.300" /></>,
    serbest: <><path d="M4 14h24M16 8v6M28 8v20M4 10v8" stroke="#223" /><path d="M2 24h6M5 21v6M22 24h6M25 21v6" stroke="#1a5e9a" /><rect x="14" y="4" width="5" height="5" fill="#1a3a8a" stroke="none" /></>,
    uzak: <><text x="0" y="25" fontSize="22" fontFamily="Liberation Sans, sans-serif" fontWeight="700" fill="#111" stroke="none">?</text><path d="M20 3c-6 0-2 12-7 14 5 2 1 14 7 14" stroke="#111" strokeWidth="1.300" /><rect x="25" y="2" width="5" height="30" fill="#f5e300" stroke="#111" /><path d="M27.500 5v24" stroke="#111" strokeDasharray="2 2" /></>,
    kot: <><circle cx="10" cy="21" r="8.500" fill="#dde5ec" stroke="#9fb0bf" /><path d="M1 21h32M10 10v22" stroke="#9fb0bf" /><text x="17" y="13" fontSize="14" fontFamily="Liberation Sans, sans-serif" fill="#9fb0bf" stroke="none">1.2</text></>,
    kesit: <><path d="M2 14h32" stroke="#889" /><path d="M6 14l9 16 9-16" stroke="#445" /><text x="16" y="11" fontSize="14" fontFamily="Liberation Sans, sans-serif" fill="#345" stroke="none">1.2</text></>,
    ciroz: <path d="M16 2h2c3 0 0 4 0 8v16c0 4 2 5-1 5h-3" stroke="#333" strokeWidth="1.200" />,
    etriye: <path d="M6 7l22-5 2 3v27H6z" stroke="#444" strokeWidth="1.300" />,
    tarama: <><path d="M17 9l8 8-8 8-8-8z" stroke="#5586ac" strokeWidth="3" /><path d="M11 3l6 5 6-5M11 31l6-5 6 5M3 11l5 6-5 6M31 11l-5 6 5 6" stroke="#5586ac" strokeWidth="3" /></>,
    kalipk: <path d="M1 22h13M20 22h13M3 20l4-6 4 6M23 20l4-6 4 6M14 24h6" stroke="#a5b4c4" strokeWidth="1.200" />,
};

const LIcon = ({ n }) => (
    <svg width="34" height="34" viewBox="0 0 34 34" fill="none" stroke="#111" className="shrink-0 overflow-visible">
        {n.split('+').map((p, i) => <g key={i}>{L[p]}</g>)}
    </svg>
);

const Caret = ({ c = '#666' }) => <span className="inline-block w-0 h-0 border-x-[3px] border-x-transparent border-t-[3px] align-middle" style={{ borderTopColor: c }} />;

// --- ribbon parts ---
const Group = ({ w, label, children }) => (
    <div className={`${w} h-[85px] rounded-[3px] border border-[#b3b7bf] flex flex-col bg-gradient-to-b from-[#ffffff] to-[#f6f8fb] overflow-hidden shrink-0`}>
        <div className="h-[68px] flex">{children}</div>
        <div className="h-[15px] text-center leading-[15px] text-[#5d606b] bg-gradient-to-b from-[#e4e8ee] to-[#d9dde4]">{label}</div>
    </div>
);

const Big = ({ w, n, lines, caret, dim }) => (
    <div className={`${w} h-[68px] flex flex-col items-center shrink-0 whitespace-nowrap leading-[13px] ${dim ? 'text-[#8a909a]' : 'text-[#4c4f5b]'}`}>
        <div className="h-[39px] flex items-center justify-center"><LIcon n={n} /></div>
        <div>{lines[0]}</div>
        <div>{lines[1]}{caret && <span className="ml-[2px]"><Caret /></span>}</div>
    </div>
);

const Col = ({ w, items }) => (
    <div className={`${w} flex flex-col items-center shrink-0`}>
        {items.map((n, i) => <div key={i} className="h-[22px] flex items-center">{n && <Ic n={n} />}</div>)}
    </div>
);

const RSep = ({ m = 'ml-0' }) => <div className={`${m} w-px h-[56px] mt-[7px] bg-[#c6c9d0] shrink-0`} />;

const Ribbon = () => (
    <div className="h-[91px] pt-[1px] pl-[4px] flex gap-[4px] bg-[#e1e6ec] border-t-2 border-[#b9d7dc] shrink-0">
        <Group w="w-[149px]" label="Pencere">
            <Big w="w-[50px]" n="pencere" lines={['Pencere', 'Değiştir']} />
            <RSep />
            <Big w="w-[52px]" n="kat" lines={['Kat', 'listesi']} caret />
            <Big w="w-[34px]" n="cizim" lines={['Çizim', 'Listesi']} caret />
        </Group>
        <Group w="w-[177px]" label="Çizim Oluştur">
            <Big w="w-[62px]" n="beton+pencil" lines={['Betonarme', '']} caret />
            <Big w="w-[40px]" n="celik+pencil" lines={['Çelik', '']} caret />
            <Big w="w-[72px]" n="kalip+pencil" lines={['Kalıp İskelesi', 'Çizimleri']} />
        </Group>
        <Group w="w-[205px]" label="İlkel Objeler">
            <Big w="w-[44px]" n="surekli" lines={['Sürekli', 'Çizgi']} caret />
            <Col w="w-[20px]" items={['plusbar', 'target', 'arc']} />
            <Col w="w-[34px]" items={['cloud', 'trifill', 'oval']} />
            <Col w="w-[36px]" items={['wave', 'squig', 'image']} />
            <Big w="w-[70px]" n="kutup" lines={['Kütüphane', '']} caret />
        </Group>
        <Group w="w-[315px]" label="Değiştir">
            <Col w="w-[28px]" items={['compass', 'triloop', 'moveg']} />
            <RSep m="ml-[4px]" />
            <Col w="w-[30px]" items={['rulerpen', 'dropper', 'note']} />
            <RSep m="ml-[2px]" />
            <Big w="w-[50px]" n="tasi" lines={['Taşı', '']} />
            <Col w="w-[16px]" items={['rotate', 'mirror', 'fadecross']} />
            <RSep m="ml-[9px]" />
            <Col w="w-[32px]" items={['bars', 'column', 'redcross']} />
            <Col w="w-[36px]" items={['trim', 'fillet', 'rectn']} />
            <Col w="w-[18px]" items={['trim2', 'fillet2', 'eraser']} />
            <RSep m="ml-[8px]" />
            <Big w="w-[52px]" n="ofset" lines={['Ofset', '']} />
            <Col w="w-[12px]" items={['brk', 'brk2', 'xcross']} />
        </Group>
        <Group w="w-[168px]" label="Düzenle">
            <Big w="w-[48px]" n="klonla" lines={['Klonla', '']} />
            <Col w="w-[16px]" items={['copy', 'pastef', 'zplane']} />
            <RSep m="ml-[9px]" />
            <Col w="w-[30px]" items={['cloneup', 'clonedown', 'circles']} />
            <RSep m="ml-[3px]" />
            <Col w="w-[32px]" items={['lyrA', 'lyrB', 'lyrC']} />
            <Col w="w-[20px]" items={['lyrD', 'gridcur', 'eraserw']} />
        </Group>
        <Group w="w-[135px]" label="Yakalama">
            <Col w="w-[24px]" items={['lshape', 'fadegrid', 'lshape']} />
            <RSep m="ml-[6px]" />
            <Col w="w-[32px]" items={['gridr+lock', 'snapx+lock', 'snapz+lock']} />
            <RSep m="ml-[1px]" />
            <Col w="w-[32px]" items={['perp', 'para', 'corner']} />
            <RSep m="ml-[2px]" />
            <Col w="w-[30px]" items={['ctan', 'dotl', 'dotc']} />
        </Group>
        <Group w="w-[75px]" label="Referans">
            <Big w="w-[46px]" n="uzak" lines={['Uzaklık', '']} />
            <Col w="w-[20px]" items={['m2', 'angle', 'mm2']} />
        </Group>
        <Group w="w-[186px]" label="Ölçüler">
            <Big w="w-[48px]" n="serbest" lines={['Serbest', 'Ölçü']} />
            <Col w="w-[20px]" items={['fadeframe', 'fadeframe', 'hbars']} />
            <div className="w-[10px] shrink-0" />
            <Big w="w-[28px]" n="kot" lines={['Kot', '']} dim />
            <Big w="w-[58px]" n="kesit" lines={['Kesit', 'Kot']} />
            <Col w="w-[6px]" items={['redtri', 'rarc', 'abcarr']} />
        </Group>
        <Group w="w-[92px]" label="Donatı">
            <Big w="w-[48px]" n="ciroz" lines={['Çiroz', '']} />
            <Big w="w-[36px]" n="etriye" lines={['Etriye', '']} />
        </Group>
        <Group w="w-[80px]" label="Tarama">
            <Big w="w-[54px]" n="tarama" lines={['Tanımlı', 'Tarama']} caret />
        </Group>
        <Group w="w-[154px]" label="" />
        <Group w="w-[106px]" label="Araçlar">
            <Big w="w-[74px]" n="kalipk" lines={['Kalıp / Temel', 'Planı Kesiti']} caret dim />
            <RSep />
            <Col w="w-[28px]" items={['mesh', 'angle', 'n123']} />
        </Group>
    </div>
);

// --- top bar ---
const TopBar = () => (
    <div className="h-[22px] flex items-center shrink-0 text-[#4f525c] whitespace-nowrap">
        <div className="w-[1328px] flex items-center shrink-0">
            <span className="ml-[62px] w-[118px]">Analiz ve Tasarım</span>
            <span className="w-[61px]">Raporlar</span>
            <div className="w-[64px] h-[22px] mt-[2px] -mb-[2px] rounded-t-[3px] border border-b-0 border-[#a9cbd2] bg-gradient-to-b from-[#d8e9ec] to-[#e6f1f3] text-center leading-[21px]">Çizimler</div>
        </div>
        <div className="w-[213px] h-[21px] flex items-center bg-[#e7e9ee] border border-[#b8bcc4] shrink-0">
            <div className="w-[197px] h-full flex items-center bg-white pl-[3px]">
                <svg width="14" height="14" viewBox="0 0 14 14" fill="none" stroke="#aaa"><circle cx="8" cy="5.500" r="4" /><path d="M5 9l-3 4" /></svg>
                <span className="ml-[3px] italic text-[#9a9da4]">Herhangi bir komut ara...</span>
            </div>
            <div className="flex-1 text-center"><Caret /></div>
        </div>
        <div className="w-[24px] flex justify-end shrink-0"><Ic n="lines4" s={16} /></div>
        <div className="w-[29px] flex justify-center shrink-0"><Ic n="stairs" s={16} /></div>
        <div className="w-[139px] shrink-0" />
        <span className="w-[39px] text-[#6a6d76] shrink-0">Görünüm</span>
        <span className="ml-[19px]"><Caret /></span>
        <div className="ml-[7px]"><Ic n="nodes" s={16} /></div>
        <div className="ml-[6px] w-px h-[14px] bg-[#aaa]" />
        <div className="ml-[5px] w-[13px] h-[17px] bg-[#2a55c9] text-[#dfe8ff] text-center leading-[17px]">?</div>
        <span className="ml-[9px]"><Caret /></span>
        <div className="ml-[8px] w-[8px] h-[2px] mt-[8px] bg-[#8b8e95]" />
        <div className="ml-[11px] w-[9px] h-[8px] border border-[#999]" />
        <span className="ml-[9px] text-[13px] text-[#999] font-bold">✕</span>
    </div>
);

// --- horizontal toolbar ---
const HBtn = ({ n }) => <div className="w-[22px] h-[22px] flex items-center justify-center shrink-0"><Ic n={n} /></div>;
const HSep = () => <div className="w-[8px] flex justify-center shrink-0"><div className="w-px h-[16px] bg-[#a8adb6]" /></div>;
const Grip = () => <div className="w-[3px] h-[14px] border-l-2 border-dotted border-[#9fa4ad] shrink-0" />;

const HRow = ({ items }) => items.map((n, i) => (n === '|' ? <HSep key={i} /> : <HBtn key={i} n={n} />));

const Toolbar = () => (
    <div className="h-[24px] mt-[2px] flex items-center shrink-0">
        <div className="w-[1216px] h-[24px] pl-[4px] flex items-center rounded-r-[3px] bg-gradient-to-b from-[#eef1f6] to-[#c9ced8]">
            <Grip />
            <div className="w-[2px]" />
            <HRow items={['zoomfit', 'zoombox', '|', 'rulerpen', 'dropper', 'note', '|', 'compass', 'triloop', '|', 'move', 'moveg', 'rotate', 'fadecross', 'mirror', 'column', 'redcross', '|', 'trim', 'trim2', 'offs', 'bars', 'brk', 'brk2', 'xcross', 'fillet', 'fillet2', 'rectn', 'eraser', '|', 'griddot', 'colsb', 'bluegrid', '|', 'image', 'aletter', 'wave', 'arc', 'circle', 'cloud', 'trifill', 'zig', 'plusbar', 'qruler', 'm2', 'angle', 'mm2', '|', 'fadelvl', 'eye', '|', 'win1', 'win2', '|', 'lshape', 'fadegrid', '|', 'xy', 'ez', 'e3d', 'eo']} />
        </div>
        <div className="ml-[9px] w-[316px] h-[24px] pl-[3px] flex items-center rounded-r-[3px] bg-gradient-to-b from-[#eef1f6] to-[#c9ced8]">
            <Grip />
            <div className="w-[2px]" />
            <HRow items={['fadeA', 'fadeB', 'fadeC', 'fadeD', 'fadeE', 'fadeF', 'chart1', 'chart2', 'chart3', 'chart4', 'bolt']} />
            <HSep />
            <div className="w-[22px] h-[22px] flex items-center justify-center rounded-[2px] border border-[#d9a441] bg-gradient-to-b from-[#ffe9a8] to-[#fbc766]"><Ic n="activeg" /></div>
            <HBtn n="table" />
            <span className="ml-[5px] mt-[8px]"><Caret c="#555" /></span>
        </div>
    </div>
);

// --- vertical toolbars ---
const VBar = ({ items, wide, handle = 'h-[12px]' }) => (
    <div className={`${wide} rounded-t-[4px] flex flex-col items-center bg-gradient-to-r from-[#f3f5f9] to-[#c9ced8]`}>
        <div className="h-[10px] w-full flex justify-center items-center shrink-0"><div className="w-[12px] border-t-2 border-dotted border-[#a4a9b2]" /></div>
        {items.map((n, i) => (n === '|'
            ? <div key={i} className="h-[8px] w-full flex items-center justify-center shrink-0"><div className="w-[14px] h-px bg-[#b4b8c0]" /></div>
            : <div key={i} className="h-[21px] flex items-center justify-center shrink-0"><Ic n={n} /></div>))}
        <div className={`${handle} w-full mt-auto rounded-b-[4px] bg-gradient-to-b from-[#bdc0c7] to-[#abaeb5] flex items-center justify-end pr-[4px] shrink-0`}>
            <span className="w-0 h-0 border-y-[3px] border-y-transparent border-l-[4px] border-l-white" />
        </div>
    </div>
);

const leftItems = ['list', '|', 'lyrA', 'lyrB', 'lyrC', 'lyrD', 'gridcur', '|', 'qruler', '|', 'doclines', '|', 'zplane', 'copy', 'paste', 'clonedash', 'cloneup', 'clonedown', 'circles', '|', 'fplane', 'fframe', 'fblock', 'fcut', 'fL', '|', 'fcols', '|', 'autoabc', '|', 'binoc'];
const col1 = ['tgrid', 'nodes', 'hatchf+pen', 'ibeam+pen', 'frameb+pen', 'stairs+pen', 'bgrid+pen', 'winblue', 'foot+pen', 'frame2+pen', 'roof+pen', 'cross', 'tee+pen', 'tee2+pen', 'zigz+pen', 'colrow+pen', 'roof+pen', 'fpenc+penyel', 'greendoc', 'fltri', 'n123'];
const col2a = ['checker+brc', 'mesh+brc', 'lines4+brc', 'bgrid+brc', '|', 'beamF+brc', 'pilaster+brc', 'funnel', 'slab', 'portal+brc', '|', 'foot+brc', 'rectin+brc', 'roof+brc', 'fadewin+brc', '|', 'tee+brc', 'tee2+brc', 'zigz+brc', 'colrow+brc', 'dome+brc', '|', 'redblue', 'chkblue'];
const col2b = ['colsp+ybr', 'wedge+ybr', 'gridb+ybr', 'cbox+ybr', 'tbox+ybr', 'wallb+ybr', 'barsv+ybr', 'rail', 'xbox+ybr', 'waves+ybr', 'star+ybr', 'dashb+ybr', 'hatchsq+ybr', 'flag+ybr'];
const col3a = ['copy+docr', '|', 'check1+doc', 'check1+doc', 'check1+doc', 'lfold+doc', 'rainbow', '|', 'beamF+doc', 'stairs+doc', 'bgrid+doc', 'colsp+doc', 'cone+doc', 'stackb+doc', 'beamF+doc', 'lightf+doc', 'roof+doc', 'box2+doc', 'box2+doc', 'colrow+doc', '|', 'colsp+docr', 'dome+docr', 'tee+doc', 'tee2+doc', '|', 'redarr+doc', 'redarr1+doc', 'colrow+doc', '|', 'axes+doc', '|', 'docred', 'fimage+doc', 'crossr+docr'];
const col3b = ['rulerh+doc', 'linesr+doc', 'coil+doc', 'wedgeb+doc', 'beamg+doc', 'redrail+doc', 'bluerail+doc', 'vfun+doc'];

// --- the drawing on the black sheet ---
const M = (ox, oy, kx, ky) => ([a, b, c, d]) => [ox + a / kx, oy + b / ky, ox + c / kx, oy + d / ky];
const P5 = M(500, 430, 2.703, 3); // main plan
const P4 = M(560, 240, 3, 3); // horizontal sections
const P6 = M(300, 500, 3, 3); // vertical sections

const Lines = ({ d, map, c, w = 1, dash, tick }) => (
    <g stroke={c} strokeWidth={w} strokeDasharray={dash}>
        {d.map((r, i) => {
            const [x1, y1, x2, y2] = map(r);
            return (
                <g key={i}>
                    <line x1={x1} y1={y1} x2={x2} y2={y2} />
                    {tick && (y1 === y2
                        ? <path d={`M${x1} ${y1 - 2}v4M${x2} ${y1 - 2}v4`} strokeWidth="1" fill="none" />
                        : <path d={`M${x1 - 2} ${y1}h4M${x1 - 2} ${y2}h4`} strokeWidth="1" fill="none" />)}
                </g>
            );
        })}
    </g>
);

const Box = ({ r, map, fill = 'none', c, w = 1, dash }) => {
    const [x1, y1, x2, y2] = map(r);
    return <rect x={x1} y={y1} width={x2 - x1} height={y2 - y1} fill={fill} stroke={c} strokeWidth={w} strokeDasharray={dash} />;
};

const Txt = ({ x, y, t, map, fill = '#9a9a9a', size = 4.5, rot, bold }) => {
    const [a, b] = map([x, y, x, y]);
    return <text x={a} y={b} fontSize={size} fill={fill} fontWeight={bold ? 700 : 400} textAnchor="middle" transform={rot ? `rotate(${rot} ${a} ${b})` : undefined}>{t}</text>;
};

const H = (y, a, b) => [a, y, b, y];
const V = (x, a, b) => [x, a, x, b];

const redThick = [V(125, 355, 945), V(149, 355, 945), V(1369, 355, 945), V(1393, 355, 945), V(501, 305, 980), V(1139, 270, 985), V(809, 565, 985), V(1156, 826, 985), V(1018, 295, 620), H(155, 320, 1270), H(181, 320, 1270), H(1063, 320, 1270), H(1090, 320, 1270), H(484, 270, 1305), H(802, 218, 1305), H(517, 680, 1057), H(871, 320, 532), H(843, 800, 1020), V(725, 725, 985), V(540, 520, 638)];
const redThin = [V(1085, 533, 622), V(968, 268, 322), H(325, 1155, 1300), H(460, 1185, 1305), H(437, 888, 1007), H(301, 305, 388), H(453, 295, 405), H(496, 562, 724), H(622, 452, 735), H(646, 252, 405), H(712, 540, 730), H(811, 680, 845), H(1005, 323, 427), H(705, 1180, 1305), H(762, 1168, 1290), H(948, 1188, 1268), H(966, 1188, 1305), V(558, 305, 465), V(787, 852, 982), V(363, 840, 960), V(307, 858, 958), V(417, 355, 445), V(315, 340, 425), V(1190, 562, 720), V(1211, 840, 925), V(965, 625, 925)];
const cyanP = [H(385, 320, 400), H(381, 565, 725), H(307, 885, 957), H(457, 830, 1070), H(577, 548, 806), H(577, 935, 1070), H(772, 541, 1092), H(853, 545, 718), H(916, 755, 815), H(904, 930, 1245), H(885, 1170, 1250), H(600, 1200, 1245), H(388, 1172, 1250), H(400, 1200, 1250), H(847, 330, 392), H(907, 316, 397), H(680, 1198, 1250), H(624, 935, 965), V(349, 310, 455), V(951, 310, 430), V(1296, 332, 468), V(645, 505, 600), V(296, 555, 640), V(596, 635, 920), V(870, 520, 715), V(764, 760, 810), V(375, 855, 1000), V(428, 865, 930), V(1231, 610, 760), V(1288, 850, 965)];
const magP = [H(362, 345, 1250), H(380, 345, 1250), V(325, 480, 920), V(345, 440, 920), V(1250, 475, 880), V(1266, 475, 880), H(920, 380, 625), H(940, 380, 625), H(920, 990, 1245), H(940, 990, 1245)];
const hatchP = [[325, 362, 348, 422, '#00ff00'], [325, 560, 348, 620, '#00ff00'], [623, 595, 642, 644, '#00ff00'], [1250, 362, 1266, 478, '#ff00ff'], [1245, 602, 1266, 665, '#00ff00'], [1245, 878, 1266, 940, '#00ff00'], [325, 917, 382, 940, '#00ff00'], [625, 362, 728, 378, '#ff00ff'], [907, 362, 950, 381, '#00ff00'], [625, 786, 642, 940, '#ff00ff'], [826, 602, 993, 620, '#ff00ff'], [826, 920, 993, 940, '#ff00ff']];
const yTxt = [[480, 373, 'PS 8.201   25/90 /260'], [800, 373, 'PS 8.202  25/90 /260'], [1020, 373, 'PS 8.203  25/90 /161'], [693, 355, 'PZ.01  25/100'], [810, 727, 'PS 02.10   25/90 /120'], [875, 632, 'PZ.03  25/245'], [920, 952, 'PZ.02  25/245'], [510, 932, 'PS 02.04     25/90 /260'], [1055, 932, 'PS 2.05  25/90 /307'], [365, 610, 'SZ 3 3'], [660, 638, 'SZ 3 4'], [903, 395, 'SZ 3 2'], [1285, 665, 'SZ 3 8'], [340, 948, 'SZ 3 1'], [1282, 892, 'SZ 3 7']];
const yRot = [[335, 520, 'PS 8.06  25/90 /240'], [335, 700, 'PS 8.08  25/90 /240'], [353, 510, '80/60 /240'], [1258, 565, 'PS 8.06  25/90 /240'], [1258, 720, 'PS 8.09  25/90 /240'], [1275, 565, '80/60 /240'], [618, 835, 'PZ.01  25/105'], [1275, 400, '25/60 /210'], [1258, 850, 'PS 8.07  25/90']];
const gTxt = [[795, 152, '1368'], [477, 179, '430'], [632, 179, '30'], [773, 179, '339'], [949, 179, '124.5'], [1130, 179, '397'], [477, 1061, '430'], [632, 1061, '30'], [773, 1061, '339'], [949, 1061, '124.5'], [1130, 1061, '397'], [795, 1088, '1368'], [795, 482, '1315'], [518, 800, '1315'], [273, 800, '100'], [603, 494, '110'], [680, 494, '110'], [773, 515, '289'], [960, 515, '269'], [887, 300, 'Ø8/20/20   L=108 AJ'], [540, 571, 'Ø8/20/17'], [760, 571, 'L=300 AJ'], [988, 451, 'L=102 AJ'], [855, 451, '20 Ø8/8 11'], [630, 388, '20 Ø8/8/8 11'], [662, 388, 'L=102 AJ'], [693, 766, 'Ø8/20/25'], [1060, 766, 'L=401 AJ'], [547, 847, '20 Ø8/8 11'], [692, 847, 'L=80.0 Ü AJ'], [1100, 898, 'L=80.0 Ü AJ'], [1040, 898, 'Ø8/20/17'], [1040, 571, 'Ø8/20/20'], [1225, 317, '262'], [1215, 372, 'Ø8/20/20'], [1200, 408, 'L=76 AJ'], [1225, 570, 'Ø8/20/20'], [1228, 596, 'L=76 AJ'], [1210, 668, 'Ø8/20/20'], [338, 838, 'Ø8/20/15'], [395, 838, 'L=88 AJ'], [335, 898, 'Ø8/20/15'], [395, 898, 'L=105 AJ'], [380, 402, '11Ø8/20/30 L=105 AJ'], [758, 907, 'Ø8/20/21'], [820, 907, 'L=95 AJ'], [350, 293, '98'], [365, 293, '98'], [325, 449, '73'], [375, 449, '73'], [1230, 954, '130'], [590, 703, '131'], [675, 703, '131'], [475, 863, '167'], [385, 863, '167'], [350, 997, '95'], [398, 997, '95']];
const gRot = [[142, 480, '318'], [119, 648, '785'], [143, 768, '449'], [1366, 480, '318'], [1386, 648, '785'], [1366, 768, '449'], [492, 650, '318'], [1135, 315, '112'], [1135, 648, '318'], [1000, 400, '218'], [802, 668, '280'], [718, 790, '140'], [718, 913, '140'], [288, 596, 'Ø8/20/18 L=200 AJ'], [357, 350, '15Ø8/20 L=105'], [590, 680, 'L=200 AJ'], [638, 530, 'Ø8/8 11'], [652, 530, 'L=110 AJ'], [860, 690, 'Ø8/8/8 11'], [863, 558, 'L=270 AJ'], [945, 340, 'L=110 AJ'], [945, 410, 'Ø8/20/8'], [1240, 400, '11 Ø8/8 11'], [1290, 390, 'L=76 AJ'], [1230, 650, 'L=70 AJ'], [1240, 705, 'Ø8/20/11'], [628, 740, 'Ø8/20/11'], [640, 740, 'L=100 AJ'], [588, 870, '30 Ø8 11'], [770, 780, 'Ø8/20'], [372, 955, 'Ø8/20/15'], [420, 850, 'L=70 AJ'], [418, 930, '160'], [1222, 845, 'Ø8/20'], [1283, 840, 'L=120 AJ'], [1222, 930, '220']];

const axisV = [[325, '1'], [625, '2'], [642, '3'], [907, '4'], [993, '5'], [1266, '6']];
const axisH = [[360, 'A'], [601, 'B'], [940, 'C']];

const Bubble = ({ cx, cy, t }) => (
    <g>
        <circle cx={cx} cy={cy} r="3.600" fill="none" stroke="#ff3a00" strokeWidth="1.200" />
        <text x={cx} y={cy + 2.500} fontSize="7" fill="#ffff00" textAnchor="middle">{t}</text>
    </g>
);

const Plan = () => (
    <g>
        <Lines map={P5} c="#808080" d={axisV.flatMap(([x]) => [V(x, 72, 305), V(x, 950, 1205)])} />
        <Lines map={P5} c="#808080" dash="6 3 2 3" d={axisV.map(([x]) => V(x, 305, 950))} />
        <Lines map={P5} c="#808080" d={axisH.flatMap(([y]) => [H(y, 45, 250), H(y, 1270, 1505)])} />
        <Lines map={P5} c="#808080" dash="6 3 2 3" d={axisH.map(([y]) => H(y, 250, 1270))} />
        {axisV.flatMap(([x, t]) => [60, 1217].map((y) => {
            const [a, b] = P5([x, y, x, y]);
            return <Bubble key={`${t}${y}`} cx={a} cy={b} t={t} />;
        }))}
        {axisH.flatMap(([y, t]) => [33, 1517].map((x) => {
            const [a, b] = P5([x, y, x, y]);
            return <Bubble key={`${t}${x}`} cx={a} cy={b} t={t} />;
        }))}
        <Lines map={P5} c="#0000ff" w={1.200} dash="12 3 3 3" d={[H(290, 680, 1330), H(436, 235, 1340), H(745, 185, 1345), V(255, 562, 1040), V(471, 268, 1020), V(1126, 222, 1015)]} />
        <Lines map={P5} c="#ff00ff" w={1.200} d={magP} />
        <Box map={P5} r={[747, 733, 828, 752]} c="#ff00ff" w={1.200} />
        {hatchP.map(([a, b, c, d, col], i) => <Box key={i} map={P5} r={[a, b, c, d]} fill="url(#hb)" c={col} w={1.200} />)}
        <Box map={P5} r={[805, 708, 1015, 962]} c="#ffff00" dash="3 2" />
        <Box map={P5} r={[842, 750, 977, 920]} c="#ffff00" />
        <Lines map={P5} c="#ffff00" dash="2 2" d={[[845, 755, 975, 920], [975, 755, 845, 920]]} />
        <Lines map={P5} c="#00ffff" d={cyanP} />
        <Lines map={P5} c="#ff0000" w={1.200} tick d={redThick} />
        <Lines map={P5} c="#ff0000" tick d={redThin} />
        <Lines map={P5} c="#d9a0a0" d={[H(682, 732, 765), H(806, 900, 935)]} />
        {gTxt.map(([x, y, t], i) => <Txt key={i} map={P5} x={x} y={y} t={t} />)}
        {gRot.map(([x, y, t], i) => <Txt key={i} map={P5} x={x} y={y} t={t} rot={-90} />)}
        {yTxt.map(([x, y, t], i) => <Txt key={i} map={P5} x={x} y={y} t={t} fill="#c8c800" size={5.500} />)}
        {yRot.map(([x, y, t], i) => <Txt key={i} map={P5} x={x} y={y} t={t} fill="#c8c800" size={5} rot={-90} />)}
        {[[660, 286, '1'], [685, 286, '△'], [1328, 286, '△'], [1343, 286, '1'], [220, 433, '2'], [242, 430, '△'], [1334, 430, '△'], [1352, 433, '2'], [168, 742, '3'], [192, 740, '△'], [1338, 740, '△'], [1354, 742, '3']].map(([x, y, t], i) => <Txt key={i} map={P5} x={x} y={y} t={t} fill="#0000ff" size={9} />)}
        {[[248, 545, '4'], [248, 565, '△'], [248, 1052, '4'], [248, 1030, '△'], [466, 250, '5'], [466, 272, '△'], [466, 1038, '5'], [466, 1016, '△'], [1120, 205, '6'], [1120, 228, '△'], [1120, 1032, '6'], [1120, 1008, '△']].map(([x, y, t], i) => <Txt key={i} map={P5} x={x} y={y} t={t} fill="#0000ff" size={9} rot={-90} />)}
    </g>
);

const Level = ({ map, x, y, rot }) => {
    const [a, b] = map([x, y, x, y]);
    return (
        <g transform={rot ? `rotate(-90 ${a} ${b})` : undefined}>
            <path d={`M${a - 9} ${b + 8}l2 -2l1 0l2 -3h10`} fill="none" stroke="#e0b0b0" />
            <text x={a + 1} y={b} fontSize="5" fill="#aaa">-0.50</text>
        </g>
    );
};

const Sections = () => (
    <g>
        {[[610, 49, 1265, 97], [127, 233, 1265, 277], [67, 415, 1265, 460]].map((r, i) => <Box key={i} map={P4} r={r} fill="url(#hg)" c="#555" />)}
        {[[181, 209, 205, 233], [1207, 209, 1225, 233], [181, 392, 205, 415], [650, 392, 740, 415], [1207, 392, 1225, 415]].map((r, i) => <Box key={i} map={P4} r={r} fill="#fff" c="#777" />)}
        <Lines map={P4} c="#999" d={[V(826, 209, 233), V(874, 209, 233), V(511, 392, 415), V(532, 392, 415), V(922, 392, 415)]} />
        <Lines map={P4} c="#ff0000" d={[V(948, 45, 100), V(708, 228, 280), V(678, 412, 465), H(208, 174, 207), H(208, 820, 878), H(208, 1200, 1230), H(391, 174, 207), H(391, 504, 537), H(391, 642, 743), H(391, 1200, 1230)]} />
        {[[615, 142, 1258, 182], [132, 320, 1258, 357], [72, 508, 1258, 550]].map((r, i) => <Box key={i} map={P4} r={r} c="#00ffff" />)}
        <Lines map={P4} c="#00ffff" d={[H(313, 987, 1257), H(354, 950, 1010), H(505, 927, 1257), H(544, 890, 950)]} />
        {[[937, 118, '1-1 KESİTİ'], [693, 297, '2-2 KESİTİ'], [664, 480, '3-3 KESİTİ']].map(([x, y, t], i) => <Txt key={i} map={P4} x={x} y={y} t={t} fill="#00007f" size={7.500} />)}
        {[[960, 137, '4Ø/16/ 17'], [1165, 137, 'L=843 Ü AJ'], [960, 179, '4Ø/16/ 17'], [753, 179, '860'], [1200, 179, 'L=837 AJ'], [618, 314, '20Ø/16/ 17'], [937, 314, 'L=1200'], [1095, 311, '20 Ø/16/ 17'], [1228, 311, 'L=300'], [323, 356, '1183'], [600, 356, '20Ø/16/ 17'], [905, 356, 'L=1200'], [1020, 350, '460'], [1095, 350, '20 Ø/16/ 17'], [1210, 350, 'L=460'], [555, 506, '30 Ø/16/ 17'], [875, 506, 'L=1200'], [1098, 500, '30 Ø/16/ 17'], [1228, 500, 'L=300'], [260, 545, '1183'], [538, 545, '30 Ø/16/ 17'], [845, 545, 'L=1200'], [972, 542, '460'], [1100, 542, '30 Ø/16/ 17'], [1228, 542, 'L=460']].map(([x, y, t], i) => <Txt key={i} map={P4} x={x} y={y} t={t} />)}
        <Level map={P4} x={1208} y={28} />
        <Level map={P4} x={988} y={211} />
        <Level map={P4} x={975} y={394} />

        {[[80, 62, 125, 766], [263, 97, 310, 766], [446, 391, 490, 766]].map((r, i) => <Box key={i} map={P6} r={r} fill="url(#hg)" c="#555" />)}
        {[[57, 150, 80, 170], [57, 710, 80, 730], [241, 150, 263, 170], [241, 710, 263, 730]].map((r, i) => <Box key={i} map={P6} r={r} fill="#fff" c="#777" />)}
        {[[166, 65, 206, 763], [349, 100, 389, 763], [539, 394, 580, 763]].map((r, i) => <Box key={i} map={P6} r={r} c="#00ffff" />)}
        <Lines map={P6} c="#ff0000" d={[H(400, 72, 128), H(418, 260, 310), H(565, 440, 495), V(55, 145, 175), V(55, 382, 440), V(55, 520, 548), V(55, 705, 737), V(241, 145, 175), V(241, 347, 415), V(241, 705, 737)]} />
        <Lines map={P6} c="#999" d={[H(211, 57, 78), H(349, 57, 78), H(385, 57, 78), H(390, 57, 78), H(409, 57, 78), H(433, 57, 78), H(524, 57, 78), H(542, 57, 78), H(577, 57, 78), H(211, 243, 263), H(349, 243, 263), H(409, 243, 263)]} />
        {[[145, 412, '6-6 KESİTİ'], [328, 430, '5-5 KESİTİ'], [513, 578, '4-4 KESİTİ']].map(([x, y, t], i) => <Txt key={i} map={P6} x={x} y={y} t={t} fill="#00007f" size={7.500} rot={-90} />)}
        {[[160, 120, 'L=543 AJ'], [160, 640, '8 Ø/16'], [199, 125, 'L=843 Ü AJ'], [199, 540, '4 Ø/16/17'], [199, 612, '860'], [343, 215, 'L=320 Ü'], [343, 680, '20 Ø/16'], [385, 210, 'L=300'], [385, 620, '460'], [385, 695, '20 Ø/16/17'], [535, 455, 'L=320 AJ'], [535, 560, '4 Ø/16'], [574, 420, 'L=76 AJ'], [574, 555, '4 Ø/16/17'], [574, 678, '460']].map(([x, y, t], i) => <Txt key={i} map={P6} x={x} y={y} t={t} rot={-90} />)}
        <Level map={P6} x={60} y={118} rot />
        <Level map={P6} x={245} y={262} rot />
        <Level map={P6} x={428} y={448} rot />
    </g>
);

const Sheet = () => (
    <div className="ml-[264px] mt-[74px] w-[1525px] h-[717px] bg-black overflow-hidden shrink-0">
        <svg width="1525" height="717" viewBox="292 214 1525 717" fontFamily="Liberation Sans, sans-serif" className="block">
            <defs>
                <pattern id="hg" width="4" height="4" patternUnits="userSpaceOnUse" patternTransform="rotate(45)">
                    <rect width="4" height="4" fill="#ffffff" />
                    <line x1="0" y1="0" x2="0" y2="4" stroke="#808080" strokeWidth="1" />
                </pattern>
                <pattern id="hb" width="4" height="4" patternUnits="userSpaceOnUse" patternTransform="rotate(45)">
                    <rect width="4" height="4" fill="#ffffff" />
                    <line x1="0" y1="0" x2="0" y2="4" stroke="#000" strokeWidth="2" />
                </pattern>
            </defs>
            <g shapeRendering="crispEdges">
                <Sections />
                <Plan />
            </g>
        </svg>
    </div>
);

// --- floating parts ---
const Check = ({ on }) => (
    <span className="w-[11px] h-[11px] border border-black bg-white flex items-center justify-center shrink-0">
        {on && <svg width="9" height="9" viewBox="0 0 9 9" stroke="#000" strokeWidth="1.700"><path d="M0 0l9 9M9 0L0 9" /></svg>}
    </span>
);

const Lock = () => (
    <svg width="13" height="13" viewBox="0 0 13 13" fill="none" className="shrink-0">
        <rect x="1" y="5" width="8" height="7" fill="#dfe6f5" stroke="#222" />
        <path d="M3 8h2M3 10h4" stroke="#1a3fb0" />
        <path d="M7 5V2.500a2 2 0 0 1 4 0V5" stroke="#222" />
    </svg>
);

const layers = [
    ['Standart', true], ['Aks', true], ['Çizgi', true], ['Donatı Çizgisi', true], ['Donatı Topl. Uzun. Yazısı', true], ['Donatı Yazısı', true], ['Kolon', true], ['Kot', false],
    ['Ölçülendirme', true, true], ['Panel', true], ['Radye Döşeme', false], ['Radye Döşeme Kenarı', false], ['Su Basman Perde', true], ['Yazı', false],
];

const LayerMenu = () => (
    <>
        <div className="absolute left-[1595px] top-0 w-[134px] h-[22px] flex">
            <div className="w-[122px] bg-white flex items-center pl-[3px] gap-[2px] border-b border-[#9a9a9a]">
                <Check on />
                <Lock />
                <span className="ml-[3px] text-black">Standart</span>
            </div>
            <div className="flex-1 flex items-center justify-center rounded-[1px] border border-[#d8a94d] bg-gradient-to-b from-[#ffe6a0] to-[#f7b64d]"><Caret c="#333" /></div>
        </div>
        <div className="absolute left-[1595px] top-[22px] w-[194px] h-[300px] bg-white border border-[#a5a5a5] pt-[3px] pl-[2px] pr-[2px] shadow-[1px_1px_1px_rgba(0,0,0,0.35)]">
            {layers.map(([name, on, active]) => (
                <div key={name} className={`h-[21px] flex items-center ${active ? 'bg-[#0078d7] text-white' : 'text-black'}`}>
                    <div className={`w-[33px] h-[21px] flex items-center pl-[3px] gap-[3px] shrink-0 ${active ? 'bg-gradient-to-b from-[#fff0bd] to-[#fdd77a]' : ''}`}>
                        <Check on={on} />
                        <Lock />
                    </div>
                    <span className="ml-[2px]">{name}</span>
                </div>
            ))}
        </div>
    </>
);

const BigArrow = () => (
    <svg width="224" height="74" viewBox="0 0 224 74" className="absolute left-[1365px] top-[168px]">
        <path d="M0 17H109V0L224 37 109 74V57H0z" fill="#ed1c24" />
    </svg>
);

const CoordField = ({ v, blank }) => (
    <div className={`w-[64px] h-[20px] border border-[#8c8c8c] pl-[5px] leading-[18px] text-black whitespace-nowrap overflow-hidden tracking-[-0.2px] ${blank ? 'bg-[#f0f0f0]' : 'bg-white'}`}>{v}</div>
);

const CoordBox = () => (
    <div className="absolute left-[32px] top-[145px] w-[190px] h-[93px] bg-[#eef0f3] border border-white shadow-[1px_1px_0_2px_#a7acb5] px-[2px] pt-[3px]">
        <div className="h-[23px] bg-[#b9c0cb] flex items-center justify-between pl-[2px] pr-[3px] font-bold text-[#4d5059]">
            <span>Koordinat Kutusu</span>
            <span className="text-[#7d8089] text-[13px] font-normal">✕</span>
        </div>
        <div className="mt-[1px] flex flex-col gap-[1px]">
            {[['X', '5599.03 cm', 'L', '2594.62 cm'], ['Y', '3771.4 cm', 'A', '228.610'], ['Z', '', '', '']].map(([a, v, b, u]) => (
                <div key={a} className="h-[20px] flex items-center">
                    <span className="ml-[2px] w-[12px] h-[12px] border border-[#444] bg-white" />
                    <span className="w-[15px] pl-[1px] text-[#1a2a6c]">{a}</span>
                    <CoordField v={v} blank={a === 'Z'} />
                    {b && <span className="w-[26px] pl-[5px] text-[#1a2a6c]">{b}</span>}
                    {b && <CoordField v={u} />}
                </div>
            ))}
        </div>
    </div>
);

export default function App() {
    return (
        <div className="relative w-[1920px] h-[1016px] overflow-hidden flex flex-col bg-[#d0d5de] text-[11px] font-['Noto_Sans','Liberation_Sans',sans-serif]">
            <TopBar />
            <Ribbon />
            <Toolbar />

            <div className="flex h-[877px] shrink-0">
                <div className="w-[27px] pl-[2px] shrink-0">
                    <VBar wide="w-[24px] h-[569px]" items={leftItems} />
                </div>

                <div className="w-[1792px] flex flex-col shrink-0">
                    <div className="h-[793px] bg-[#dcdcdc] border-t border-l border-[#f0f0f0] shrink-0 overflow-hidden">
                        <Sheet />
                    </div>
                    <div className="h-[5px] shrink-0" />
                    <div className="h-[60px] bg-[#f0f0f0] pt-[1px] text-black leading-[13px] shrink-0">
                        <div>Komut : move/taşı/m/ta</div>
                        <div>Taşınacak objeleri seçin.</div>
                        <div>*İptal*</div>
                        <div>Komut :</div>
                    </div>
                    <div className="h-[19px] flex bg-gradient-to-b from-[#c4c7ce] via-[#a8abb3] to-[#b6b9c1] border-t border-[#a0a3aa] text-[#2d2f38] leading-[18px] shrink-0">
                        <div className="w-[257px] pl-[5px] border-r border-[#e3e5e9]">BOŞ</div>
                        <div className="w-[1308px] pl-[4px] border-r border-[#e3e5e9]">Hazır</div>
                        <div className="w-[76px] pl-[4px] border-r border-[#e3e5e9]">tf / m</div>
                        <div className="w-[76px] pl-[8px] border-r border-[#e3e5e9]">1 : 100</div>
                        <div className="w-[75px] pl-[7px] border-r border-[#e3e5e9]">% 44</div>
                    </div>
                </div>

                <div className="w-[101px] flex shrink-0">
                    <div className="ml-[3px] mt-[4px] w-[20px] h-[117px] bg-gradient-to-r from-[#fdeab0] to-[#fbd98a] border border-[#e8d29a] text-[12px] leading-[18px] text-[#6f6f6f] pt-[3px] font-['Liberation_Sans',sans-serif] [writing-mode:vertical-rl]">Rapor Önizleme</div>
                    <div className="ml-[1px] mt-[88px] w-[24px]">
                        <VBar wide="w-[24px] h-[463px]" items={col1} />
                    </div>
                    <div className="ml-[2px] w-[25px] flex flex-col gap-[2px]">
                        <VBar wide="w-[25px] h-[474px]" items={col2a} />
                        <VBar wide="w-[25px] h-[316px]" items={col2b} />
                    </div>
                    <div className="ml-[1px] w-[25px] flex flex-col">
                        <VBar wide="w-[25px] h-[679px]" items={col3a} />
                        <VBar wide="w-[25px] h-[198px]" items={col3b} />
                    </div>
                </div>
            </div>

            <div className="absolute left-[6px] -top-[21px] w-[36px] h-[36px] rounded-full bg-gradient-to-b from-white to-[#b9bcc2] border border-[#8f9299]" />
            <CoordBox />
            <BigArrow />
            <LayerMenu />
        </div>
    );
}
